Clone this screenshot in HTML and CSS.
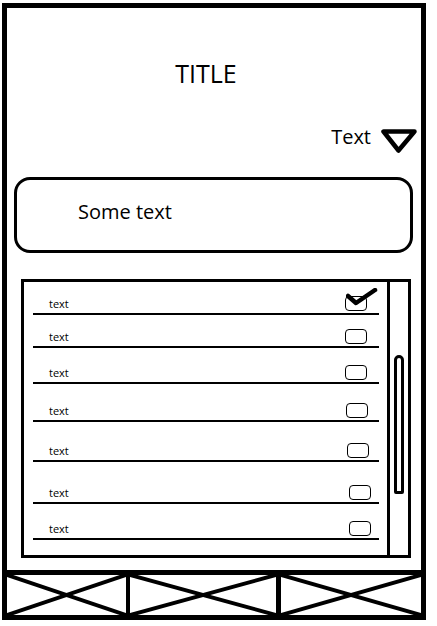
FILE: index.html
```html
<!DOCTYPE html>
<html lang="en">
<head>
    <meta charset="UTF-8">
    <meta name="viewport" content="width=device-width, initial-scale=1.0">
    <title>Wireframe</title>
    <link rel="stylesheet" href="styles.css">
</head>
<body>
    <div class="phone">
        <div class="title">TITLE</div>

        <div class="picker">
            <span class="picker-label">Text</span>
            <svg class="picker-arrow" width="36" height="26" viewBox="0 0 36 26">
                <polygon points="2.5,3.5 33.5,3.5 17.5,22.5" fill="none" stroke="#000" stroke-width="4.5" stroke-linejoin="round"/>
            </svg>
        </div>

        <div class="text-box">Some text</div>

        <div class="list-box">
            <div class="list-rows">
                <div class="row">
                    <span class="row-text">text</span>
                    <span class="checkbox">
                        <svg class="tick" width="32" height="20" viewBox="0 0 32 20">
                            <polyline points="2,8 10,15 29,2" fill="none" stroke="#000" stroke-width="4.5" stroke-linejoin="round" stroke-linecap="round"/>
                        </svg>
                    </span>
                </div>
                <div class="row"><span class="row-text">text</span><span class="checkbox"></span></div>
                <div class="row"><span class="row-text">text</span><span class="checkbox"></span></div>
                <div class="row"><span class="row-text">text</span><span class="checkbox"></span></div>
                <div class="row"><span class="row-text">text</span><span class="checkbox"></span></div>
                <div class="row"><span class="row-text">text</span><span class="checkbox"></span></div>
                <div class="row"><span class="row-text">text</span><span class="checkbox"></span></div>
            </div>
            <div class="scroll">
                <div class="scroll-thumb"></div>
            </div>
        </div>

        <div class="nav">
            <div class="nav-cell nav-first">
                <svg class="cross" viewBox="0 0 100 40" preserveAspectRatio="none">
                    <line x1="0" y1="0" x2="100" y2="40" vector-effect="non-scaling-stroke"/>
                    <line x1="0" y1="40" x2="100" y2="0" vector-effect="non-scaling-stroke"/>
                </svg>
            </div>
            <div class="nav-cell nav-second">
                <svg class="cross" viewBox="0 0 100 40" preserveAspectRatio="none">
                    <line x1="0" y1="0" x2="100" y2="40" vector-effect="non-scaling-stroke"/>
                    <line x1="0" y1="40" x2="100" y2="0" vector-effect="non-scaling-stroke"/>
                </svg>
            </div>
            <div class="nav-cell nav-third">
                <svg class="cross" viewBox="0 0 100 40" preserveAspectRatio="none">
                    <line x1="0" y1="0" x2="100" y2="40" vector-effect="non-scaling-stroke"/>
                    <line x1="0" y1="40" x2="100" y2="0" vector-effect="non-scaling-stroke"/>
                </svg>
            </div>
        </div>
    </div>
</body>
</html>
```

FILE: styles.css
```css
body {
    margin: 0;
    background-color: #fff;
    font-family: 'Open Sans', 'Noto Sans', sans-serif;
    color: #000;
}

.phone {
    box-sizing: border-box;
    width: 424px;
    height: 617px;
    margin: 3px 0 0 2px;
    border: 5px solid #000;
    display: flex;
    flex-direction: column;
}

.title {
    margin-top: 53px;
    padding-right: 16px;
    font-size: 25px;
    line-height: 1;
    text-align: center;
}

.picker {
    margin-top: 41px;
    margin-right: 4px;
    height: 26px;
    display: flex;
    flex-direction: row;
    justify-content: flex-end;
    align-items: flex-start;
    gap: 10px;
}

.picker-label {
    font-size: 20px;
    line-height: 1;
}

.picker-arrow {
    display: block;
    margin-top: 1px;
}

.text-box {
    box-sizing: border-box;
    height: 76px;
    margin: 24px 8px 0 7px;
    padding: 22px 0 0 61px;
    border: 3px solid #000;
    border-radius: 16px;
    font-size: 20px;
    line-height: 1;
}

.list-box {
    box-sizing: border-box;
    width: 390px;
    height: 279px;
    margin: 26px 0 0 14px;
    border: 3px solid #000;
    display: flex;
    flex-direction: row;
}

.list-rows {
    flex: 1;
    display: flex;
    flex-direction: column;
    padding: 0 8px 0 9px;
}

.row {
    box-sizing: border-box;
    display: flex;
    flex-direction: row;
    justify-content: space-between;
    align-items: flex-end;
    padding: 0 12px 2px 16px;
    border-bottom: 2px solid #000;
}

.row:nth-child(1) { height: 33px; }
.row:nth-child(2) { height: 33px; }
.row:nth-child(3) { height: 36px; }
.row:nth-child(4) { height: 38px; padding-right: 11px; }
.row:nth-child(5) { height: 40px; padding-right: 10px; }
.row:nth-child(6) { height: 42px; padding-right: 8px; }
.row:nth-child(7) { height: 36px; padding-right: 8px; }

.row-text {
    font-size: 11px;
    line-height: 1;
    margin-bottom: 2px;
}

.checkbox {
    position: relative;
    box-sizing: border-box;
    width: 22px;
    height: 15px;
    border: 1.5px solid #000;
    border-radius: 4px;
}

.tick {
    position: absolute;
    left: 0;
    top: -9px;
}

.scroll {
    width: 18px;
    border-left: 3px solid #000;
}

.scroll-thumb {
    box-sizing: border-box;
    width: 10px;
    height: 139px;
    margin: 73px 0 0 4px;
    border: 3px solid #000;
    border-radius: 5px 5px 2px 2px;
}

.nav {
    margin-top: auto;
    height: 45px;
    border-top: 5px solid #000;
    box-sizing: border-box;
    display: flex;
    flex-direction: row;
}

.nav-cell {
    height: 100%;
}

.nav-first {
    width: 119px;
}

.nav-second {
    width: 146px;
    border-left: 4px solid #000;
}

.nav-third {
    flex: 1;
    border-left: 5px solid #000;
}

.cross {
    display: block;
    width: 100%;
    height: 100%;
    stroke: #000;
    stroke-width: 4;
}
```
